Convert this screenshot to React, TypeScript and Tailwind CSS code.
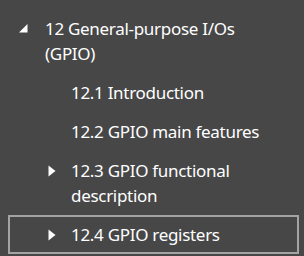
import React from "react";

type Item = {
  level: 0 | 1;
  text: string;
  icon: "down" | "right" | null;
  selected?: boolean;
};

const items: Item[] = [
  { level: 0, text: "12 General-purpose I/Os (GPIO)", icon: "down" },
  { level: 1, text: "12.1 Introduction", icon: null },
  { level: 1, text: "12.2 GPIO main features", icon: null },
  { level: 1, text: "12.3 GPIO functional description", icon: "right" },
  { level: 1, text: "12.4 GPIO registers", icon: "right", selected: true },
];

function Expanded() {
  return (
    <svg width="9" height="9" viewBox="0 0 9 9" className="block">
      <polygon points="0,8.5 8.5,8.5 8.5,0" fill="#ffffff" />
    </svg>
  );
}

function Collapsed() {
  return (
    <svg width="8" height="12" viewBox="0 0 8 12" className="block">
      <polygon points="0.5,0.5 7.5,6 0.5,11.5" fill="#ffffff" />
    </svg>
  );
}

export default function App() {
  return (
    <div
      className="w-[304px] h-[256px] overflow-hidden bg-[#474747] pt-[9px] text-white text-[17px] leading-[25px] tracking-[-0.3px]"
      style={{ fontFamily: '"Segoe UI", "Noto Sans", sans-serif' }}
    >
      {items.map((it, i) => (
        <div
          key={i}
          className={
            "ml-[8px] mr-[5px] border-2 py-[5px] flex " +
            (it.selected ? "border-[#a3a3a3]" : "border-transparent")
          }
        >
          {it.level === 0 ? (
            <div className="pl-[9px] w-[35px] shrink-0 h-[25px] flex items-center">
              <Expanded />
            </div>
          ) : (
            <div className="pl-[38px] w-[61px] shrink-0 h-[25px] flex items-center">
              {it.icon === "right" ? <Collapsed /> : null}
            </div>
          )}
          <div className="w-[220px]">{it.text}</div>
        </div>
      ))}
    </div>
  );
}
